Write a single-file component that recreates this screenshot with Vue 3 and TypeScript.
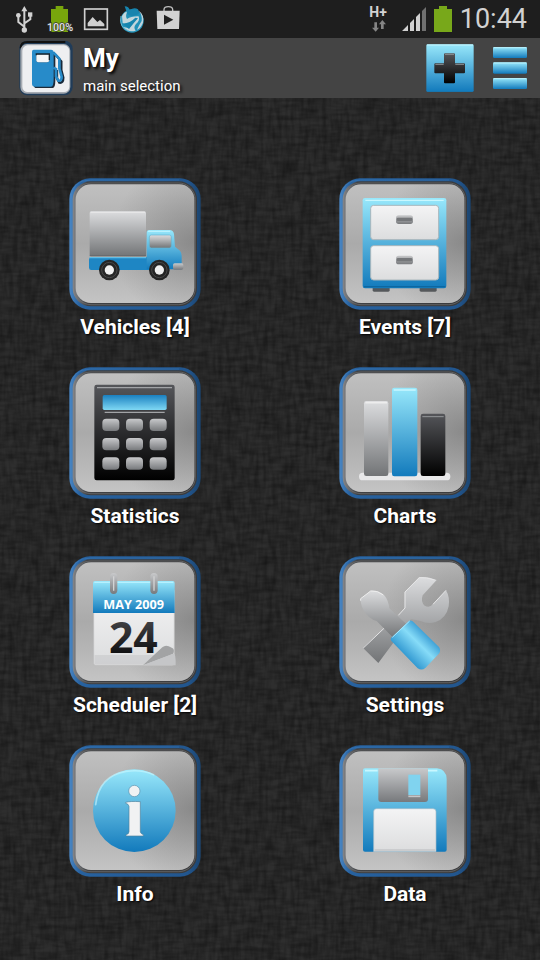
<script setup lang="ts">
type IconName =
  | 'truck'
  | 'cabinet'
  | 'calculator'
  | 'bars'
  | 'calendar'
  | 'tools'
  | 'info'
  | 'floppy'

interface MenuEntry {
  icon: IconName
  label: string
  count?: number
}

const entries: MenuEntry[] = [
  { icon: 'truck', label: 'Vehicles', count: 4 },
  { icon: 'cabinet', label: 'Events', count: 7 },
  { icon: 'calculator', label: 'Statistics' },
  { icon: 'bars', label: 'Charts' },
  { icon: 'calendar', label: 'Scheduler', count: 2 },
  { icon: 'tools', label: 'Settings' },
  { icon: 'info', label: 'Info' },
  { icon: 'floppy', label: 'Data' },
]

const caption = (entry: MenuEntry): string =>
  entry.count === undefined ? entry.label : `${entry.label} [${entry.count}]`

const keyColumns: number[] = [127, 198, 269]
const keyRows: number[] = [176, 234, 292]
</script>

<template>
  <div class="screen">
    <svg class="shared-defs" width="0" height="0" aria-hidden="true">
      <defs>
        <linearGradient id="blue" x1="0" y1="0" x2="0" y2="1">
          <stop offset="0" stop-color="#98e8fb" />
          <stop offset="1" stop-color="#127abc" />
        </linearGradient>
        <linearGradient id="blue-flip" x1="0" y1="0" x2="0" y2="1">
          <stop offset="0" stop-color="#1a80c0" />
          <stop offset="1" stop-color="#7fd8f4" />
        </linearGradient>
        <linearGradient id="grey" x1="0" y1="0" x2="0" y2="1">
          <stop offset="0" stop-color="#dcdddf" />
          <stop offset="1" stop-color="#727476" />
        </linearGradient>
        <linearGradient id="dark" x1="0" y1="0" x2="0" y2="1">
          <stop offset="0" stop-color="#55565a" />
          <stop offset="1" stop-color="#000000" />
        </linearGradient>
        <linearGradient id="white" x1="0" y1="0" x2="0" y2="1">
          <stop offset="0" stop-color="#f4f4f5" />
          <stop offset="1" stop-color="#dcddde" />
        </linearGradient>
        <linearGradient id="key" x1="0" y1="0" x2="0" y2="1">
          <stop offset="0" stop-color="#c8c9cb" />
          <stop offset="1" stop-color="#77797c" />
        </linearGradient>
        <linearGradient id="ring" x1="0" y1="0" x2="1" y2="0">
          <stop offset="0" stop-color="#4a86c4" />
          <stop offset="0.08" stop-color="#2762a0" />
          <stop offset="0.9" stop-color="#22568e" />
          <stop offset="1" stop-color="#1b446f" />
        </linearGradient>
        <linearGradient id="bezel" x1="0" y1="0" x2="1" y2="0">
          <stop offset="0" stop-color="#85888d" />
          <stop offset="0.12" stop-color="#3f4144" />
          <stop offset="1" stop-color="#3a3b3d" />
        </linearGradient>
        <linearGradient id="face" x1="0" y1="0" x2="0" y2="1">
          <stop offset="0" stop-color="#c0c0c0" />
          <stop offset="0.5" stop-color="#aaaaaa" />
          <stop offset="0.75" stop-color="#b6b6b6" />
          <stop offset="1" stop-color="#c4c4c4" />
        </linearGradient>
        <radialGradient id="face-shade" cx="1" cy="0.48" r="0.7">
          <stop offset="0" stop-color="#747474" stop-opacity="0.6" />
          <stop offset="1" stop-color="#808080" stop-opacity="0" />
        </radialGradient>
        <linearGradient id="handle" x1="0" y1="1" x2="1" y2="0">
          <stop offset="0.2" stop-color="#1783c4" />
          <stop offset="0.55" stop-color="#86dcf8" />
          <stop offset="0.8" stop-color="#1f86c6" />
        </linearGradient>
      </defs>
    </svg>

    <div class="status-bar">
      <div class="status-group">
        <svg class="notice" viewBox="30 0 84 114" aria-label="USB connected">
          <g fill="none" stroke="#d2d2d2" stroke-width="6">
            <path d="M73 88V28M73 80L55 66V50M73 70L91 58V44" />
          </g>
          <path d="M73 18L82 34H64Z" fill="#d2d2d2" />
          <circle cx="73" cy="90" r="8" fill="#d2d2d2" />
          <circle cx="55" cy="46" r="7" fill="#d2d2d2" />
          <rect x="84" y="37" width="13" height="13" fill="#d2d2d2" />
        </svg>
        <svg class="notice" viewBox="138 0 84 114" aria-label="Battery 100%">
          <path d="M153 27H167V18H190V27H204V96H153Z" fill="#78a60c" />
          <text class="battery-text" x="180" y="93" text-anchor="middle">100%</text>
        </svg>
        <svg class="notice" viewBox="246 0 84 114" aria-label="Screenshot saved">
          <rect x="254" y="27" width="68" height="61" fill="none" stroke="#d0d0d0" stroke-width="5" />
          <path d="M263 79V69L278 51L292 66L300 60L313 72V79Z" fill="#d0d0d0" />
        </svg>
        <svg class="notice" viewBox="354 0 84 114" aria-label="Browser">
          <circle cx="396" cy="63" r="35" fill="#2191b8" />
          <path d="M366 48Q372 36 384 32Q374 46 381 57Q394 48 416 49Q421 62 408 72Q399 82 407 92Q382 98 370 81L389 85Q376 73 368 70Z" fill="#c2d6dc" />
          <path d="M415 31Q434 45 429 68Q421 87 411 89Q417 75 425 63Q428 46 415 31Z" fill="#bed3dc" />
          <path d="M374 19Q387 20 389 30Q403 20 414 28Q422 44 407 46Q393 51 382 42Z" fill="#1784ae" />
          <path d="M366 70Q388 72 406 53L414 55Q403 67 387 87Z" fill="#1685ae" />
          <path d="M363 48Q356 82 386 93" fill="none" stroke="#69b6cf" stroke-width="3" />
        </svg>
        <svg class="notice" viewBox="462 0 84 114" aria-label="Play Store">
          <path d="M492 34V28Q493 20 505 20Q517 20 518 28V34" fill="none" stroke="#bfbfbf" stroke-width="4" />
          <path d="M470 32H539L537 87H472Z" fill="#d2d2d2" />
          <path d="M492 44L520 59L492 74Z" fill="#202020" />
        </svg>
      </div>
      <div class="status-group status-right">
        <svg class="network" viewBox="294 0 66 114" aria-label="H+ mobile data">
          <text class="network-text" x="298" y="52">H+</text>
          <path d="M313 67H321V83H327L317 95L306 83H313ZM333 87H341V73H348L337 60L327 73H333Z" fill="#858585" />
        </svg>
        <svg class="signal" viewBox="396 0 72 114" aria-label="Signal strength">
          <path d="M396 93L414 75V93ZM420 69L432 57V93H420ZM438 51L450 39V93H438Z" fill="#d2d2d2" />
          <path d="M456 33L468 21V93H456Z" fill="#707070" />
        </svg>
        <svg class="charge" viewBox="492 0 54 114" aria-label="Battery full">
          <path d="M492 27H507V18H531V27H546V96H492Z" fill="#78a81a" />
        </svg>
        <time class="clock" datetime="10:44">10:44</time>
      </div>
    </div>

    <header class="title-bar">
      <svg class="logo" viewBox="54 117 168 174" aria-hidden="true">
        <rect x="58" y="122" width="160" height="164" rx="24" fill="#203c59" />
        <path d="M62 145Q62 126 82 126H196" fill="none" stroke="#111" stroke-width="6" />
        <rect x="61" y="132" width="150" height="149" rx="20" fill="#a6abb2" />
        <rect x="67" y="136" width="141" height="140" rx="16" fill="#eeeff1" />
        <path d="M104 155H158Q166 155 166 163V240Q166 264 158 264H110Q101 264 101 254V164" fill="#1d2937" />
        <path d="M165 163L184 184V210L190 233Q190 250 178 248L171 235V210" fill="none" stroke="#182a3b" stroke-width="7" />
        <path fill-rule="evenodd" d="M101 149H153Q161 149 161 157V237Q161 260 153 260H105Q96 260 96 251V155Q96 149 101 149ZM109 163V181Q109 187 115 187H141Q148 187 148 181V163Z" fill="#278bc9" />
        <path d="M109 163H148V181Q148 187 141 187H115Q109 187 109 181Z" fill="#f4f6f8" />
        <path d="M109 166V162H148V181" fill="none" stroke="#16242f" stroke-width="4" />
        <path d="M160 157L178 176V205L185 230Q185 244 175 242L168 229V207L160 203" fill="none" stroke="#278bc9" stroke-width="8" />
      </svg>
      <div class="titles">
        <h1>My</h1>
        <p>main selection</p>
      </div>
      <button class="bar-button" type="button" aria-label="Add">
        <svg class="add" viewBox="468 132 144 144" aria-hidden="true">
          <rect x="469" y="133" width="142" height="142" rx="4" fill="url(#blue)" />
          <path d="M471 135H609" stroke="#c6f6ff" stroke-width="3" />
          <path d="M470 273H610" stroke="#1480c0" stroke-width="3" />
          <path d="M525 160H552Q555 160 555 163V190H582Q585 190 585 193V217Q585 220 582 220H555V247Q555 250 552 250H525Q522 250 522 247V220H496Q493 220 493 217V193Q493 190 496 190H522V163Q522 160 525 160Z" fill="url(#dark)" />
          <path d="M525 163H552M496 193H521M556 193H582" stroke="#8d9296" stroke-width="3" />
        </svg>
      </button>
      <button class="bar-button" type="button" aria-label="Menu">
        <svg class="menu" viewBox="669 132 102 144" aria-hidden="true">
          <g fill="url(#blue)">
            <rect x="669" y="141" width="102" height="33" rx="4" />
            <rect x="669" y="187" width="102" height="34" rx="4" />
            <rect x="669" y="234" width="102" height="33" rx="4" />
          </g>
          <path d="M671 143H769M671 189H769M671 236H769" stroke="#b8effb" stroke-width="3" />
        </svg>
      </button>
    </header>

    <main class="board">
      <svg class="texture" width="100%" height="100%" aria-hidden="true">
        <filter id="weft" x="0" y="0" width="100%" height="100%">
          <feTurbulence type="fractalNoise" baseFrequency="0.05 0.22" numOctaves="2" seed="4" />
          <feColorMatrix values="0 0 0 0 0  0 0 0 0 0  0 0 0 0 0  2 0 0 0 -0.7" />
        </filter>
        <filter id="warp" x="0" y="0" width="100%" height="100%">
          <feTurbulence type="fractalNoise" baseFrequency="0.22 0.05" numOctaves="2" seed="9" />
          <feColorMatrix values="0 0 0 0 0  0 0 0 0 0  0 0 0 0 0  2 0 0 0 -0.7" />
        </filter>
        <rect width="100%" height="100%" fill="#2e2e2e" />
        <rect width="100%" height="100%" filter="url(#weft)" opacity="0.28" />
        <rect width="100%" height="100%" filter="url(#warp)" opacity="0.28" />
      </svg>

      <nav class="grid" aria-label="Main selection">
        <button v-for="entry in entries" :key="entry.label" class="entry" type="button">
          <svg class="tile" viewBox="0 0 396 396" aria-hidden="true">
            <rect x="1" y="1" width="394" height="394" rx="62" fill="url(#ring)" />
            <path d="M6 330V65Q6 6 65 6H330" fill="none" stroke="#4a8ac8" stroke-width="2" opacity="0.5" />
            <rect x="11" y="10" width="373" height="375" rx="54" fill="url(#bezel)" />
            <rect x="16" y="15" width="363" height="365" rx="50" fill="none" stroke="#777" stroke-width="3" opacity="0.6" />
            <rect x="20" y="19" width="356" height="356" rx="46" fill="url(#face)" />
            <rect x="20" y="19" width="356" height="356" rx="46" fill="url(#face-shade)" />

            <g v-if="entry.icon === 'truck'" transform="translate(-27 -24)">
              <rect x="87" y="262" width="240" height="38" rx="7" fill="#1e86c4" />
              <path d="M260 188Q260 180 268 180H328Q340 180 342 192L345 230L360 242Q365 248 365 260V298H260Z" fill="url(#blue)" />
              <path d="M89 263H258" stroke="#62bde5" stroke-width="4" />
              <path d="M264 184H330" stroke="#c3f4ff" stroke-width="3" />
              <rect x="89" y="124" width="169" height="135" rx="5" fill="url(#grey)" />
              <path d="M92 127H255" stroke="#e9e9ea" stroke-width="3" />
              <path d="M89 257H258" stroke="#696b6d" stroke-width="3" />
              <rect x="268" y="195" width="66" height="39" rx="6" fill="url(#grey)" stroke="#67b3cf" stroke-width="2" />
              <rect x="339" y="280" width="31" height="19" rx="5" fill="url(#key)" />
              <g v-for="cx in [148, 298]" :key="cx">
                <circle :cx="cx" cy="300" r="31" fill="#252525" />
                <circle :cx="cx" cy="300" r="23" fill="none" stroke="#484848" stroke-width="3" />
                <circle :cx="cx" cy="300" r="14" fill="#efefef" />
              </g>
            </g>

            <g v-else-if="entry.icon === 'cabinet'" transform="translate(-27 -24)">
              <rect x="128" y="344" width="51" height="21" rx="4" fill="#55585b" />
              <rect x="269" y="344" width="51" height="21" rx="4" fill="#55585b" />
              <rect x="98" y="84" width="251" height="271" rx="7" fill="url(#blue)" />
              <path d="M106 91H341" stroke="#c9f8ff" stroke-width="4" />
              <path d="M102 350H346" stroke="#0d67a1" stroke-width="4" />
              <g v-for="y in [106, 227]" :key="y">
                <rect x="122" :y="y" width="204" height="103" rx="9" fill="url(#white)" stroke="#a8b6bc" stroke-width="3" />
                <rect x="198" :y="y + 30" width="51" height="26" rx="8" fill="url(#key)" />
                <rect x="200" :y="y + 37" width="47" height="10" rx="4" fill="#75777a" />
              </g>
            </g>

            <g v-else-if="entry.icon === 'calculator'" transform="translate(-27 -21)">
              <rect x="103" y="74" width="241" height="287" rx="7" fill="url(#dark)" />
              <path d="M111 83H336M134 157H314" stroke="#a2a4a7" stroke-width="4" />
              <rect x="128" y="105" width="192" height="45" rx="5" fill="url(#blue-flip)" />
              <template v-for="y in keyRows" :key="y">
                <rect v-for="x in keyColumns" :key="x" :x="x" :y="y" width="51" height="37" rx="12" fill="url(#key)" />
              </template>
            </g>

            <g v-else-if="entry.icon === 'bars'" transform="translate(-27 -21)">
              <rect x="87" y="338" width="274" height="23" rx="11" fill="#e8e8e9" />
              <rect x="102" y="123" width="73" height="225" rx="7" fill="url(#grey)" />
              <rect x="186" y="83" width="76" height="266" rx="7" fill="url(#blue)" />
              <rect x="272" y="161" width="74" height="187" rx="7" fill="url(#dark)" />
              <path d="M106 128H171" stroke="#ededed" stroke-width="5" />
              <path d="M191 90H257" stroke="#c5f5ff" stroke-width="5" />
              <path d="M277 170H341" stroke="#94969a" stroke-width="3" />
            </g>

            <g v-else-if="entry.icon === 'calendar'" transform="translate(-26 -21)">
              <rect x="100" y="120" width="242" height="229" rx="6" fill="url(#white)" stroke="#bcbdbe" stroke-width="2" />
              <path d="M98 192V102Q98 96 104 96H337Q343 96 343 102V192Z" fill="url(#blue)" />
              <path d="M102 100H339" stroke="#bff3ff" stroke-width="3" />
              <g v-for="x in [149, 270]" :key="x">
                <rect :x="x" y="72" width="22" height="63" rx="11" fill="url(#key)" />
                <path :d="`M${x + 11} 82V125`" stroke="#d2d3d4" stroke-width="4" />
              </g>
              <path d="M103 318H342V346H103Z" fill="#a7a8aa" opacity="0.25" />
              <text class="month" x="220" y="179" text-anchor="middle">MAY 2009</text>
              <text class="day" x="219" y="311" text-anchor="middle" fill="url(#dark)">24</text>
              <path d="M248 349L306 295Q315 287 325 292L337 298Q344 304 338 315Z" fill="#a2a3a4" />
              <path d="M248 349L338 314Q347 309 346 349Z" fill="#c5c6c8" />
            </g>

            <g v-else-if="entry.icon === 'tools'" transform="translate(-27 -24)">
              <path d="M104 294L165 238L205 202L224 180V132L267 88Q292 85 320 96L278 142Q271 162 284 173Q298 181 309 169L348 127Q360 147 356 175Q349 211 317 222Q293 229 272 219L243 213L145 345L100 301Z" fill="url(#grey)" />
              <path d="M100 300L165 238M205 202L225 180V132L268 89Q288 87 314 96M309 169L348 127" fill="none" stroke="#e5e5e6" stroke-width="3" />
              <path d="M91 153L122 128Q145 126 164 143Q175 156 178 181L232 231L191 271L140 219Q115 213 101 187Q94 176 91 153Z" fill="url(#grey)" />
              <path d="M92 158V152L122 129Q143 127 160 141" fill="none" stroke="#ededed" stroke-width="3" />
              <path d="M183 270L236 220Q242 215 248 220L327 297Q333 306 328 316L286 360Q275 369 263 361L185 280Q180 275 183 270Z" fill="url(#handle)" />
              <path d="M187 268L239 219" stroke="#a8e9ff" stroke-width="3" />
            </g>

            <g v-else-if="entry.icon === 'info'" transform="translate(-27 -24)">
              <circle cx="223" cy="221" r="124" fill="url(#blue)" />
              <path d="M107 203Q117 116 198 103Q246 97 281 113" fill="none" stroke="#c9f7ff" stroke-width="5" stroke-linecap="round" opacity="0.6" />
              <circle cx="223" cy="162" r="17" fill="#f1f2f3" stroke="#5a91ad" stroke-width="2" />
              <path d="M197 196Q211 192 241 194V285Q242 290 250 293V297H198V293Q207 291 207 284V208Q206 201 197 199Z" fill="#f1f2f3" stroke="#4e839f" stroke-width="2" />
            </g>

            <g v-else transform="translate(-26 -24)">
              <path d="M98 100Q98 94 104 94H320Q348 97 349 126V338Q349 344 343 344H104Q98 344 98 338Z" fill="url(#blue)" />
              <path d="M104 101H142M293 101H321" stroke="#c9f7ff" stroke-width="5" />
              <path d="M144 94H293V186Q293 195 284 195H153Q144 195 144 186Z" fill="url(#key)" />
              <rect x="234" y="113" width="36" height="61" fill="#80d3ef" />
              <path d="M234 178H270" stroke="#c5c6c8" stroke-width="5" />
              <path d="M130 344V224Q130 215 139 215H308Q317 215 317 224V344Z" fill="url(#white)" stroke="#a6bdc8" stroke-width="2" />
              <path d="M133 339H314" stroke="#c5c6c8" stroke-width="4" />
            </g>
          </svg>
          <span class="caption">{{ caption(entry) }}</span>
        </button>
      </nav>
    </main>
  </div>
</template>

<style>
body {
  background: #262626;
}
</style>

<style scoped>
.screen {
  display: flex;
  flex-direction: column;
  min-height: 100vh;
  color: #fff;
  font-family: Roboto, "Liberation Sans", sans-serif;
}

.shared-defs {
  position: absolute;
}

svg {
  display: block;
  flex: none;
}

button {
  margin: 0;
  padding: 0;
  border: 0;
  background: none;
  color: inherit;
  font: inherit;
  cursor: pointer;
}

.status-bar {
  display: flex;
  justify-content: space-between;
  height: 38px;
  padding: 0 13px 0 10px;
  background: #1e1e1e;
}

.status-group {
  display: flex;
  align-items: center;
  gap: 8px;
}

.notice {
  width: 28px;
  height: 38px;
}

.network {
  width: 22px;
  height: 38px;
  margin-right: 4px;
}

.signal {
  width: 24px;
  height: 38px;
}

.charge {
  width: 18px;
  height: 38px;
}

.battery-text {
  fill: #e4e4e4;
  stroke: #333;
  stroke-width: 4px;
  paint-order: stroke;
  font-size: 32px;
  font-weight: 500;
}

.network-text {
  fill: #d2d2d2;
  font-size: 42px;
  font-weight: 700;
}

.clock {
  color: #d2d2d2;
  font-size: 27px;
  line-height: 38px;
}

.title-bar {
  display: flex;
  align-items: center;
  height: 60px;
  padding: 0 13px 0 18px;
  background: #444;
}

.logo {
  width: 56px;
  height: 58px;
}

.titles {
  flex: 1;
  padding: 4px 0 0 9px;
  text-shadow: 2px 2px 3px #000;
}

.titles h1,
.titles p {
  margin: 0;
  font-weight: 400;
}

.titles h1 {
  font-size: 26px;
  font-weight: 700;
  line-height: 32px;
}

.titles p {
  font-size: 15px;
  line-height: 24px;
}

.bar-button + .bar-button {
  margin-left: 19px;
}

.add {
  width: 48px;
  height: 48px;
}

.menu {
  width: 34px;
  height: 48px;
}

.board {
  position: relative;
  flex: 1;
  padding: 80px 0 52px;
}

.texture {
  position: absolute;
  inset: 0;
}

.grid {
  position: relative;
  display: grid;
  grid-template-columns: 1fr 1fr;
  row-gap: 26px;
  justify-items: center;
}

.entry {
  display: flex;
  flex-direction: column;
  align-items: center;
  gap: 3px;
}

.tile {
  width: 132px;
  height: 132px;
}

.caption {
  font-size: 21px;
  font-weight: 700;
  line-height: 28px;
  text-shadow: 1px 1px 2px #000;
}

.month {
  fill: #fff;
  font-family: "Open Sans", sans-serif;
  font-size: 38px;
  font-weight: 700;
}

.day {
  font-family: "Open Sans", sans-serif;
  font-size: 128px;
  font-weight: 700;
}
</style>
